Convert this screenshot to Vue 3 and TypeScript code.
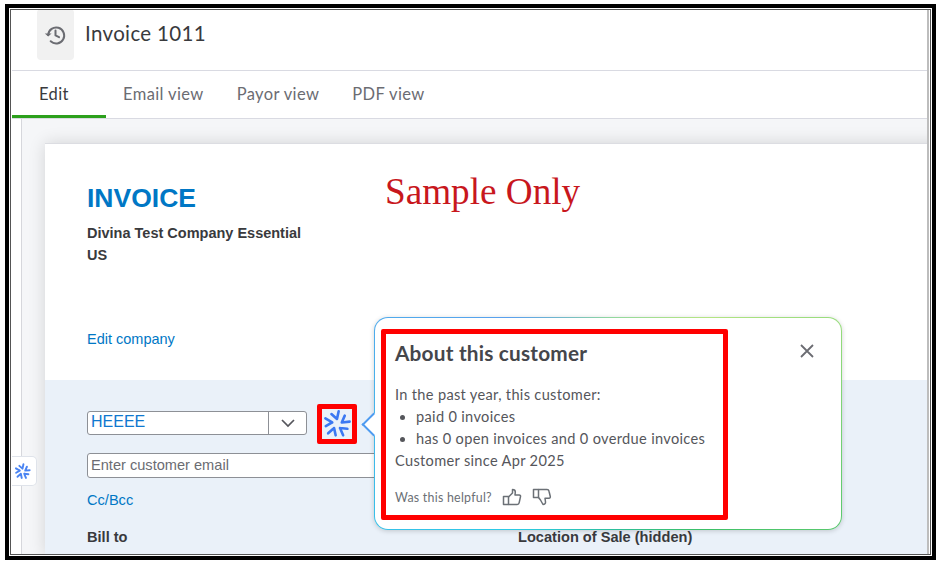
<script setup lang="ts">
const tabs: string[] = ['Email view', 'Payor view', 'PDF view']
const spokes: number[] = [0, 72, 144, 216, 288]
</script>

<template>
  <div class="stage">
    <div class="frame">
      <main class="window">
        <header class="head">
          <button class="history" aria-label="History">
            <svg width="24" height="24" viewBox="0 0 24 24" fill="none" stroke="#6b6c72" stroke-width="2">
              <path d="M5.2 12a8 8 0 1 1 2.500 6.300" stroke-linecap="round" />
              <path d="M1.800 10.400 5.200 13.600 8.600 10.400" fill="#6b6c72" stroke="none" />
              <path d="M12.500 7.500V12.400L16 14.200" stroke-linecap="round" stroke-linejoin="round" />
            </svg>
          </button>
          <h1>Invoice 1011</h1>
        </header>
        <nav class="tabs">
          <a class="tab active">Edit</a>
          <a v-for="t in tabs" :key="t" class="tab">{{ t }}</a>
        </nav>
        <div class="workspace">
          <div class="rail"></div>
          <div class="gutter">
            <section class="paper">
              <div class="company">
                <h2>INVOICE</h2>
                <p>Divina Test Company Essential</p>
                <p>US</p>
                <a class="edit">Edit company</a>
              </div>
              <div class="customer">
                <div class="picker-row">
                  <div class="picker">
                    <span class="picker-value">HEEEE</span>
                    <span class="picker-caret">
                      <svg width="16" height="10" viewBox="0 0 16 10" fill="none" stroke="#55565c" stroke-width="1.700"><path d="M2 2l6 6 6-6" /></svg>
                    </span>
                  </div>
                  <div class="ai-box">
                    <svg width="30" height="30" viewBox="0 0 30 30" fill="none" stroke="#3b78f2" stroke-width="2.600" stroke-linecap="round" stroke-linejoin="round">
                      <path v-for="a in spokes" :key="a" :transform="`rotate(${a - 6} 15 15)`" d="M15.500 10 10.500 4.500M15.500 10 18 2.500" />
                    </svg>
                  </div>
                </div>
                <div class="email">Enter customer email</div>
                <a class="cc">Cc/Bcc</a>
                <div class="labels">
                  <b>Bill to</b>
                  <b>Location of Sale (hidden)</b>
                </div>
              </div>
            </section>
          </div>
        </div>
      </main>

      <div class="sample">Sample Only</div>

      <div class="side-tab">
        <svg width="17" height="17" viewBox="0 0 30 30" fill="none" stroke="#4a84f2" stroke-width="3.400" stroke-linecap="round" stroke-linejoin="round">
          <path v-for="a in spokes" :key="a" :transform="`rotate(${a - 6} 15 15)`" d="M15.500 10 10.500 4.500M15.500 10 18 2.500" />
        </svg>
      </div>

      <aside class="popover">
        <span class="arrow"></span>
        <button class="close" aria-label="Close">
          <svg width="16" height="16" viewBox="0 0 16 16" stroke="#6b6c72" stroke-width="1.800" fill="none"><path d="M2 2l12 12M14 2 2 14" /></svg>
        </button>
        <div class="redbox">
          <h3>About this customer</h3>
          <p class="lead">In the past year, this customer:</p>
          <ul>
            <li>paid 0 invoices</li>
            <li>has 0 open invoices and 0 overdue invoices</li>
          </ul>
          <p>Customer since Apr 2025</p>
          <div class="feedback">
            <span>Was this helpful?</span>
            <svg width="20" height="20" viewBox="0 0 20 20" fill="none" stroke="#6b7076" stroke-width="1.500" stroke-linejoin="round">
              <path d="M1.500 9.500h5v8h-5z" />
              <path d="M6.500 10 10.500 6V2.500c1.800 0 2.800 1 2.800 2.500L13 8h4.200c1 0 1.500.8 1.300 1.700l-1.300 6c-.2 1.100-1 1.800-2 1.800H6.500" />
            </svg>
            <svg width="20" height="20" viewBox="0 0 20 20" fill="none" stroke="#6b7076" stroke-width="1.500" stroke-linejoin="round">
              <path d="M1.500 2.500h5v8h-5z" />
              <path d="M6.500 2.500H15c1 0 1.800.7 2 1.700l1.300 5.300c.2 1-.4 1.700-1.300 1.700h-4L13.500 15c.2 1.500-.8 2.500-2.500 2.500L8.500 13 6.500 10.500" />
            </svg>
          </div>
        </div>
      </aside>
    </div>
  </div>
</template>

<style scoped>
.stage {
  width: 940px;
  height: 566px;
  padding: 4px 4px 6px 5px;
  box-sizing: border-box;
  background: #fff;
  overflow: hidden;
}
.frame {
  position: relative;
  height: 100%;
  box-sizing: border-box;
  border: 4px solid #000;
  outline: 1px solid #555;
  outline-offset: -6px;
  padding: 1px 3px 2px 3px;
  background: #fff;
  font-family: "Liberation Sans", Arial, sans-serif;
}
.window {
  height: 100%;
  display: flex;
  flex-direction: column;
  border-right: 2px solid #bdbdbd;
  overflow: hidden;
  background: #fff;
}
.head {
  height: 61px;
  flex: none;
  display: flex;
  align-items: flex-start;
  border-bottom: 1px solid #d9dae2;
  padding-left: 25px;
}
.history {
  width: 37px;
  height: 51px;
  border: 0;
  border-radius: 4px;
  background: #f1f1f1;
  display: flex;
  align-items: center;
  justify-content: center;
  padding: 0 2px 0 0;
}
h1 {
  margin: 10px 0 0 11px;
  font: 400 20.500px/28px Lato, sans-serif;
  color: #393a3d;
  letter-spacing: 0.35px;
}
.tabs {
  height: 47px;
  flex: none;
  display: flex;
  border-bottom: 1px solid #d9dae2;
}
.tab {
  font: 400 16.500px/46px Lato, sans-serif;
  letter-spacing: 0.38px;
  color: #6b6c72;
  margin-right: 33px;
}
.tab.active {
  width: 94px;
  margin-right: 17px;
  box-sizing: border-box;
  padding-left: 27px;
  color: #393a3d;
  border-bottom: 3px solid #2ca01c;
  height: 47px;
}
.workspace {
  flex: 1;
  display: flex;
  min-height: 0;
}
.rail {
  width: 9px;
  flex: none;
  border-right: 1px solid #d6d7dc;
  background: #fff;
}
.gutter {
  flex: 1;
  min-width: 0;
  padding: 24px 0 0 23px;
  background: #f5f6f8;
  overflow: hidden;
}
.paper {
  height: 100%;
  margin-right: -20px;
  background: #fff;
  border-top: 1px solid #dcdde2;
  display: flex;
  flex-direction: column;
  box-shadow: 0 0 16px rgba(0, 0, 0, 0.14);
}
.company {
  height: 236px;
  flex: none;
  padding: 39px 0 0 42px;
  box-sizing: border-box;
  display: flex;
  flex-direction: column;
  align-items: flex-start;
}
h2 {
  margin: 0 0 9px;
  font: 700 26.500px/30px "Liberation Sans", sans-serif;
  color: #0077c5;
}
.company p {
  margin: 0;
  font: 700 14.500px/22px "Liberation Sans", sans-serif;
  color: #393a3d;
}
.edit {
  margin-top: 63px;
  font-size: 14.500px;
  line-height: 20px;
  color: #0077c5;
}
.customer {
  flex: 1;
  background: #eaf1f9;
  padding: 24px 0 0 42px;
  font-size: 14.600px;
}
.picker-row {
  display: flex;
  align-items: flex-start;
  height: 40px;
}
.picker {
  margin-top: 7px;
  width: 220px;
  height: 24px;
  box-sizing: border-box;
  border: 1px solid #8d9096;
  border-radius: 3px;
  background: #fff;
  display: flex;
  align-items: stretch;
}
.picker-value {
  flex: 1;
  padding-left: 3px;
  font-size: 16px;
  line-height: 20px;
  color: #0f78cf;
}
.picker-caret {
  width: 37px;
  border-left: 1px solid #8d9096;
  display: flex;
  align-items: center;
  justify-content: center;
}
.ai-box {
  margin-left: 10px;
  width: 40px;
  height: 40px;
  box-sizing: border-box;
  border: 5px solid #f00;
  border-radius: 2px;
  background: #eaf1f9;
  display: flex;
  align-items: center;
  justify-content: center;
}
.email {
  margin-top: 9px;
  width: 320px;
  height: 25px;
  box-sizing: border-box;
  border: 1px solid #8d9096;
  border-radius: 3px;
  background: #fff;
  padding-left: 3px;
  line-height: 22px;
  color: #6b6c72;
}
.cc {
  display: block;
  margin-top: 12px;
  line-height: 20px;
  color: #0077c5;
}
.labels {
  margin-top: 17px;
  display: flex;
  color: #393a3d;
  line-height: 20px;
}
.labels b:first-child {
  width: 431px;
}
.sample {
  position: absolute;
  left: 376px;
  top: 163px;
  font: 400 37.200px/42px "Liberation Serif", serif;
  color: #c8171d;
  white-space: nowrap;
}
.side-tab {
  position: absolute;
  left: 3px;
  top: 448px;
  width: 25px;
  height: 30px;
  border-radius: 0 5px 5px 0;
  background: #fff;
  border: 1px solid #dfe3ea;
  border-left: 0;
  box-sizing: border-box;
  display: flex;
  align-items: center;
  padding-left: 2px;
}
.popover {
  position: absolute;
  left: 365px;
  top: 309px;
  width: 468px;
  height: 213px;
  box-sizing: border-box;
  border: 1.500px solid transparent;
  border-radius: 14px;
  background:
    linear-gradient(#fff, #fff) padding-box,
    conic-gradient(from 0deg, #8fd7a0, #b5e583 12%, #3cc067 38%, #2bbfa0 50%, #2bcbe6 62%, #5aa0ee 88%, #8fd7a0) border-box;
  box-shadow: 0 1px 5px rgba(0, 0, 0, 0.18);
  font-family: Lato, sans-serif;
  color: #55565b;
}
.arrow {
  position: absolute;
  left: -10px;
  top: 98px;
  width: 17px;
  height: 17px;
  transform: rotate(45deg);
  background: #fff;
  border-left: 2px solid #4f9bf0;
  border-bottom: 2px solid #4f9bf0;
  box-sizing: border-box;
}
.close {
  position: absolute;
  right: 26px;
  top: 25px;
  width: 16px;
  height: 16px;
  padding: 0;
  border: 0;
  background: none;
  display: flex;
}
.redbox {
  position: absolute;
  left: 6px;
  top: 11px;
  width: 347px;
  height: 191px;
  box-sizing: border-box;
  border: 5px solid #f00;
  border-radius: 2px;
  padding: 6px 0 0 9px;
  background: #fff;
}
h3 {
  margin: 0 0 18px;
  font: 700 20.800px/26px Lato, sans-serif;
  letter-spacing: 0.2px;
  color: #45464b;
}
.redbox p,
ul {
  margin: 0;
  font-size: 14.600px;
  letter-spacing: 0.32px;
  line-height: 22px;
}
ul {
  padding-left: 21px;
}
.feedback {
  margin-top: 15px;
  display: flex;
  align-items: center;
  gap: 10px;
  font-size: 12.400px;
  letter-spacing: 0.25px;
  color: #6b7076;
}
</style>

<style>
html, body { margin: 0; background: #fff; }
</style>
